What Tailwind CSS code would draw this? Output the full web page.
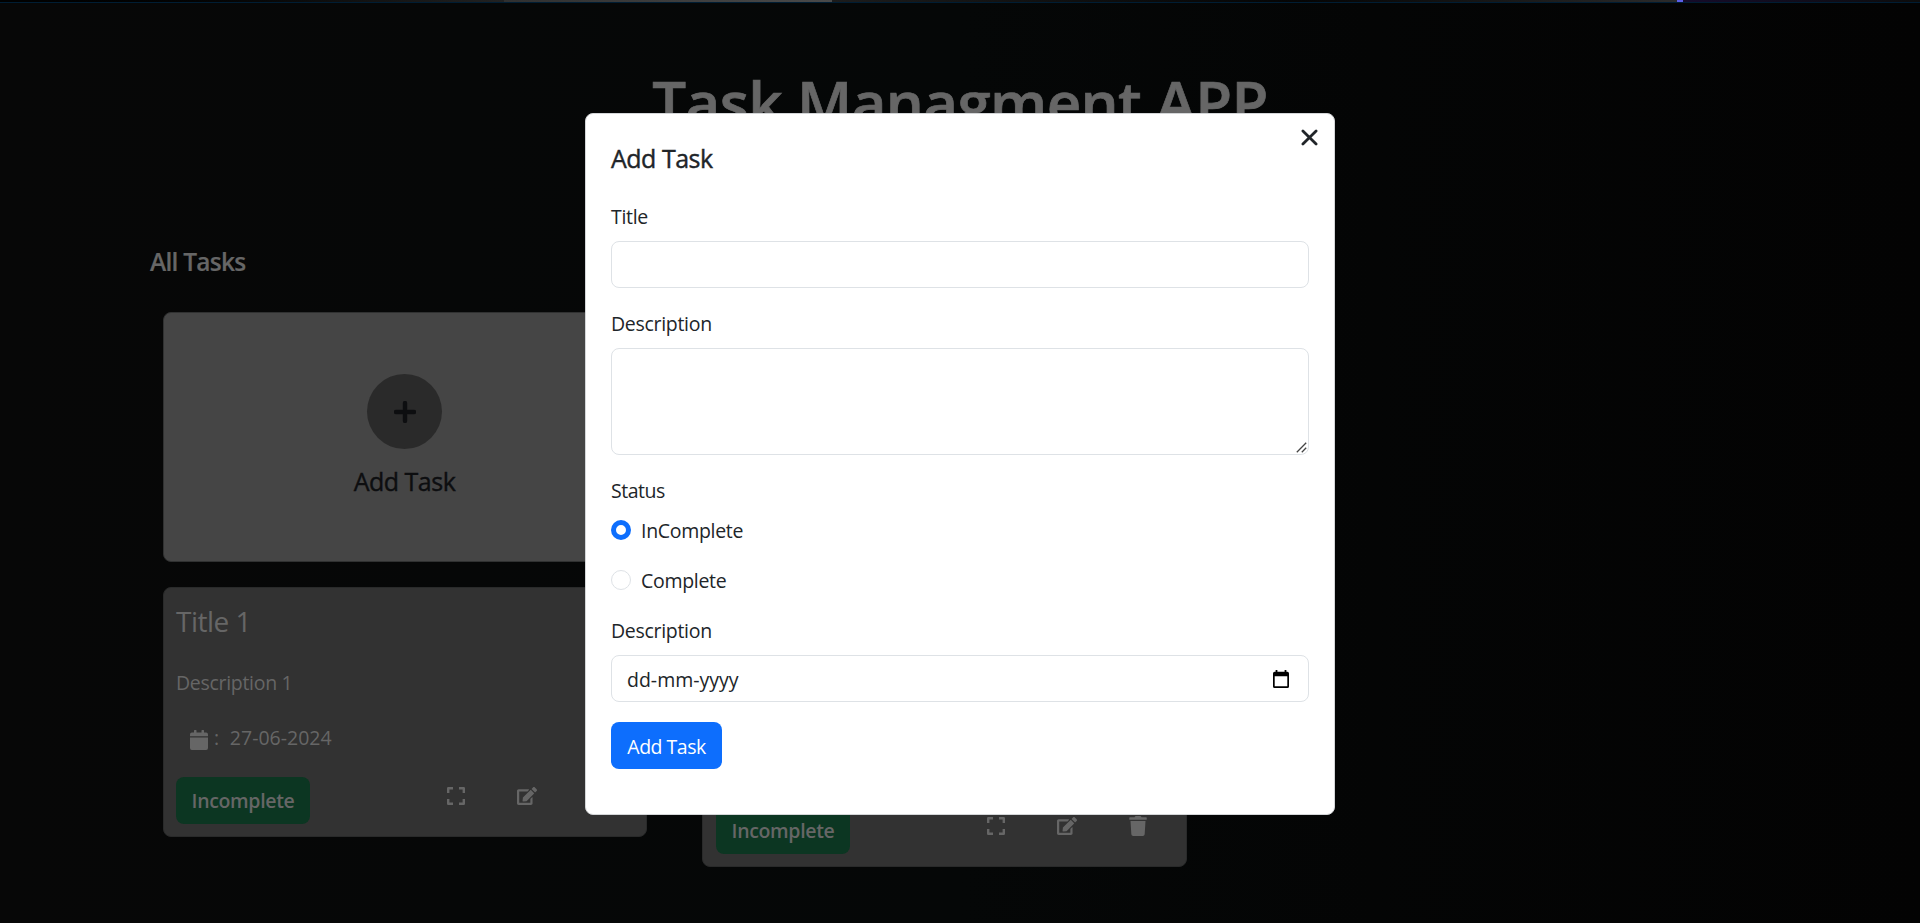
<!DOCTYPE html>
<html lang="en">
<head>
<meta charset="utf-8">
<title>Task Managment APP</title>
<script src="https://cdn.jsdelivr.net/npm/@tailwindcss/browser@4"></script>
</head>
<body class="h-[923px] overflow-hidden bg-[#050606] font-['Open_Sans',sans-serif] text-[19.5px] leading-[30px] tracking-[-0.3px]">

<svg class="hidden">
  <symbol id="expand" viewBox="0 0 18 18"><path d="M1.2 6V1.2H6M12 1.2h4.8V6M16.8 12v4.8H12M6 16.8H1.2V12" fill="none" stroke="currentColor" stroke-width="2.4" stroke-linejoin="round"/></symbol>
  <symbol id="edit" viewBox="0 0 576 512"><path fill="currentColor" d="M402.6 83.2l90.2 90.2c3.800 3.800 3.800 10 0 13.800L274.400 405.600l-92.800 10.300c-12.400 1.400-22.900-9.100-21.500-21.500l10.300-92.800L388.800 83.200c3.800-3.800 10-3.800 13.800 0zm162-22.900l-48.800-48.800c-15.200-15.200-39.900-15.200-55.200 0l-35.400 35.400c-3.800 3.800-3.800 10 0 13.800l90.200 90.200c3.800 3.800 10 3.800 13.800 0l35.400-35.400c15.200-15.300 15.200-40 0-55.200zM384 346.200V448H64V128h229.800c3.200 0 6.200-1.300 8.500-3.500l40-40c7.600-7.600 2.200-20.500-8.500-20.500H48C21.500 64 0 85.500 0 112v352c0 26.500 21.500 48 48 48h352c26.500 0 48-21.500 48-48V306.200c0-10.700-12.900-16-20.500-8.500l-40 40c-2.200 2.300-3.500 5.300-3.500 8.500z"/></symbol>
  <symbol id="trash" viewBox="0 0 448 512"><path fill="currentColor" d="M432 32H312l-9.400-18.700A24 24 0 0 0 281.100 0H166.800a23.700 23.700 0 0 0-21.400 13.300L136 32H16A16 16 0 0 0 0 48v32a16 16 0 0 0 16 16h416a16 16 0 0 0 16-16V48a16 16 0 0 0-16-16zM53.200 467a48 48 0 0 0 47.900 45h245.800a48 48 0 0 0 47.900-45L416 128H32z"/></symbol>
</svg>

<div class="flex h-full flex-col bg-linear-to-r from-[#070707] via-[#050707] to-[#030303] text-[#666]">
  <div class="flex h-[3px] shrink-0 border-b border-[#001d33]">
    <div class="w-[504px] bg-linear-to-r from-black to-[#222]"></div>
    <div class="w-[328px] bg-linear-to-r from-[#303030] to-[#4a4a4a]"></div>
    <div class="w-[468px] bg-linear-to-r from-[#1c1c1c] to-[#050505]"></div>
    <div class="w-[377px] bg-linear-to-r from-[#050505] to-[#2b2b2b]"></div>
    <div class="w-[6px] bg-[#5b5fe8]"></div>
    <div class="flex-1 bg-linear-to-r from-[#150b2a] to-[#0c0c0c]"></div>
  </div>

  <h1 class="mt-[63px] text-center text-[60px] leading-[72px] font-semibold tracking-[-0.64px] [-webkit-text-stroke:0.7px_#666]">Task Managment APP</h1>

  <main class="mt-[109px] pl-[150px]">
    <h2 class="text-[24.5px] font-semibold tracking-[-0.75px] [-webkit-text-stroke:0.2px_#666]">All Tasks</h2>
    <div class="mt-[35px] ml-[13px] flex gap-[55px]">
      <div class="flex w-[484px] flex-col gap-[25px]">
        <section class="flex h-[250px] flex-col items-center rounded-[8px] border border-[#303131] bg-[#454545] pt-[61px] pr-[1px] text-[#0d0e10]">
          <div class="flex size-[75px] items-center justify-center rounded-full bg-[#2a2a2a]">
            <svg class="size-[22px]" viewBox="0 0 22 22"><path d="M11 2v18M2 11h18" stroke="currentColor" stroke-width="4.4" stroke-linecap="round"/></svg>
          </div>
          <h3 class="mt-[17px] text-[25px] font-medium tracking-[-0.5px] [-webkit-text-stroke:0.4px_#0d0e10]">Add Task</h3>
        </section>

        <section class="flex h-[250px] flex-col rounded-[8px] border border-[#292a2a] bg-[#323232] px-[12px]">
          <h3 class="mt-[16px] text-[28px] leading-[34px] tracking-[-0.5px]">Title 1</h3>
          <p class="mt-[30px]">Description 1</p>
          <p class="mt-[25px] flex pl-[14px]">
            <svg class="mt-[6.5px] h-[20px] w-[18px]" viewBox="0 0 18 20"><path fill="currentColor" d="M0 4.400Q0 2.500 1.900 2.500H4V.6q0-.6.6-.6h1.300q.6 0 .6.600v1.900h5V.6q0-.6.600-.6h1.300q.6 0 .6.600v1.900h2.100Q18 2.500 18 4.400V6.200H0zM0 7.500H18V18.100Q18 20 16.100 20H1.900Q0 20 0 18.100z"/></svg>
            <span class="ml-[6px]">:</span><span class="ml-[11px] tracking-[0px]">27-06-2024</span>
          </p>
          <div class="mt-[24px] flex">
            <span class="flex h-[47px] w-[134px] items-center justify-center rounded-[8px] bg-[#0c3622] pt-[1px] font-semibold tracking-[-0.35px]">Incomplete</span>
            <svg class="mt-[10px] ml-[137px] size-[18px]"><use href="#expand"/></svg>
            <svg class="mt-[10px] ml-[52px] h-[18px] w-[20px]"><use href="#edit"/></svg>
            <svg class="mt-[9px] ml-[52px] h-[20px] w-[18px]"><use href="#trash"/></svg>
          </div>
        </section>
      </div>

      <section class="mt-[305px] flex h-[250px] w-[485px] flex-col justify-end rounded-[8px] border border-[#292a2a] bg-[#323232] px-[13px] pb-[12px]">
        <div class="flex">
          <span class="flex h-[47px] w-[134px] items-center justify-center rounded-[8px] bg-[#0c3622] pt-[1px] font-semibold tracking-[-0.35px]">Incomplete</span>
          <svg class="mt-[10px] ml-[137px] size-[18px]"><use href="#expand"/></svg>
          <svg class="mt-[10px] ml-[52px] h-[18px] w-[20px]"><use href="#edit"/></svg>
          <svg class="mt-[9px] ml-[52px] h-[20px] w-[18px]"><use href="#trash"/></svg>
        </div>
      </section>
    </div>
  </main>
</div>

<!-- Add task dialog -->
<div class="absolute top-[113px] left-[585px] h-[702px] w-[750px] rounded-[8px] border border-[#d4d6d8] bg-white px-[25px] pt-[29px] text-[#212529]">
  <svg class="absolute top-[15px] right-[16px] size-[17px]" viewBox="0 0 16 16"><path d="M1.800 1.800l12.400 12.400M14.200 1.800L1.800 14.200" stroke="currentColor" stroke-width="2.600" stroke-linecap="round"/></svg>
  <h3 class="text-[25px] font-medium tracking-[-0.5px] [-webkit-text-stroke:0.4px_#212529]">Add Task</h3>

  <label class="mt-[29px] block">Title</label>
  <input class="mt-[9px] block h-[47px] w-full rounded-[8px] border border-[#dee2e6]">

  <label class="mt-[21px] block">Description</label>
  <div class="relative mt-[9px] h-[107px] rounded-[8px] border border-[#dee2e6]">
    <svg class="absolute right-[1px] bottom-[1px] size-[11px]" viewBox="0 0 11 11"><path d="M.8 10.200L10.200.8M5.800 10.200L10.200 5.800" stroke="#444" stroke-width="1.300" fill="none"/></svg>
  </div>

  <div class="mt-[21px] tracking-[-0.5px]">Status</div>
  <label class="mt-[10px] flex"><span class="mt-[4px] size-[20px] rounded-full border-[5.500px] border-[#0d6efd] bg-white"></span><span class="ml-[10px]">InComplete</span></label>
  <label class="mt-[20px] flex"><span class="mt-[4px] size-[20px] rounded-full border border-[#dee2e6] bg-white"></span><span class="ml-[10px]">Complete</span></label>

  <label class="mt-[20px] block">Description</label>
  <div class="mt-[9px] flex h-[47px] items-center justify-between rounded-[8px] border border-[#dee2e6] pr-[19px] pl-[15px]">
    <span class="pt-[2px] tracking-[0px]">dd-mm-yyyy</span>
    <svg class="h-[18px] w-[16px] text-black" viewBox="0 0 16 18"><path fill="currentColor" fill-rule="evenodd" d="M1.600 1.800H2.600V0H4.400V1.800H11.600V0H13.400V1.800H14.400Q16 1.800 16 3.400V16.400Q16 18 14.400 18H1.600Q0 18 0 16.400V3.400Q0 1.800 1.600 1.800zM1.700 6.200V16.300H14.300V6.200z"/></svg>
  </div>

  <button class="mt-[20px] block h-[47px] w-[111px] rounded-[8px] bg-[#0d6efd] pt-[3px] tracking-[-0.5px] text-white">Add Task</button>
</div>
</body>
</html>
